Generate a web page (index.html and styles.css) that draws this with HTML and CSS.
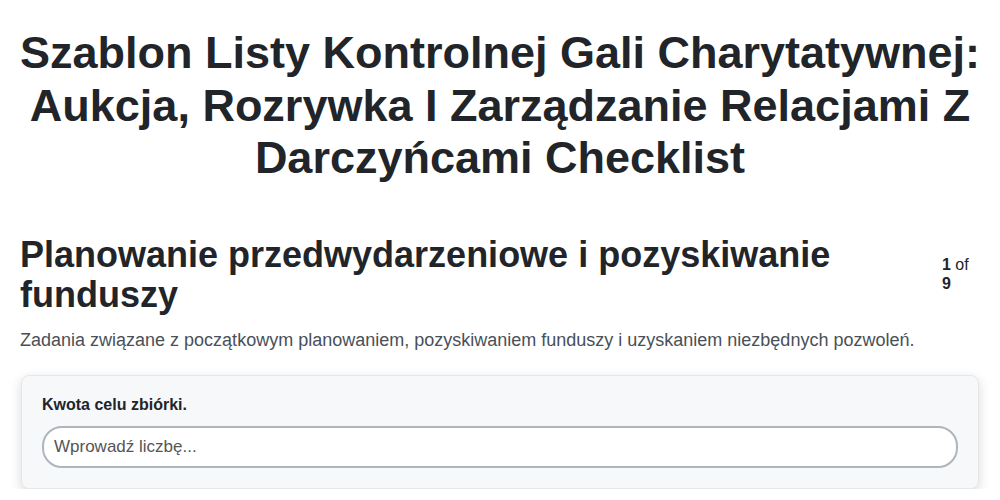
FILE: index.html
```html
<!DOCTYPE html>
<html lang="pl">
<head>
    <meta charset="UTF-8">
    <meta name="viewport" content="width=device-width, initial-scale=1.0">
    <title>Szablon Listy Kontrolnej Gali Charytatywnej</title>
    <link rel="stylesheet" href="styles.css">
</head>
<body>
    <div class="page">
        <h1 class="title">Szablon Listy Kontrolnej Gali Charytatywnej: Aukcja, Rozrywka I Zarządzanie Relacjami Z Darczyńcami Checklist</h1>

        <div class="section-header">
            <h2 class="section-title">Planowanie przedwydarzeniowe i pozyskiwanie funduszy</h2>
            <div class="section-count"><b>1</b> of <b>9</b></div>
        </div>
        <p class="section-desc">Zadania związane z początkowym planowaniem, pozyskiwaniem funduszy i uzyskaniem niezbędnych pozwoleń.</p>

        <div class="card">
            <label class="field-label" for="goal">Kwota celu zbiórki.</label>
            <input class="field-input" id="goal" type="text" placeholder="Wprowadź liczbę...">
        </div>
    </div>
</body>
</html>
```

FILE: styles.css
```css
body {
    margin: 0;
    background-color: #fff;
    color: #212529;
    font-family: "Liberation Sans", Arial, sans-serif;
}
.page {
    padding: 27px 20px 0 20px;
}
.title {
    margin: 0 -10px 50px -10px;
    font-size: 45px;
    line-height: 52.5px;
    font-weight: bold;
    text-align: center;
}
.section-header {
    display: flex;
    align-items: flex-start;
    justify-content: space-between;
    gap: 20px;
}
.section-title {
    margin: 0;
    font-size: 36px;
    line-height: 40px;
    font-weight: bold;
}
.section-count {
    width: 32px;
    flex-shrink: 0;
    margin-top: 20px;
    margin-right: 6px;
    font-size: 16px;
    line-height: 19px;
}
.section-desc {
    margin: 13px 0 23px 0;
    font-size: 18px;
    line-height: 24px;
    color: #495057;
}
.card {
    margin: 0 1px;
    background-color: #f7f8fa;
    border: 1px solid #e5e7eb;
    border-radius: 8px;
    box-shadow: 0 4px 12px rgba(0, 0, 0, 0.15);
    padding: 19px 20px 20px 20px;
}
.field-label {
    display: block;
    margin-bottom: 11px;
    font-size: 16px;
    line-height: 20px;
    font-weight: bold;
}
.field-input {
    display: block;
    box-sizing: border-box;
    width: 100%;
    height: 42px;
    padding: 0 10px;
    border: 2px solid #adb5bd;
    border-radius: 20px;
    background-color: #fff;
    font-family: "Liberation Sans", Arial, sans-serif;
    font-size: 17px;
    color: #212529;
}
.field-input::placeholder {
    color: #555;
}
```
